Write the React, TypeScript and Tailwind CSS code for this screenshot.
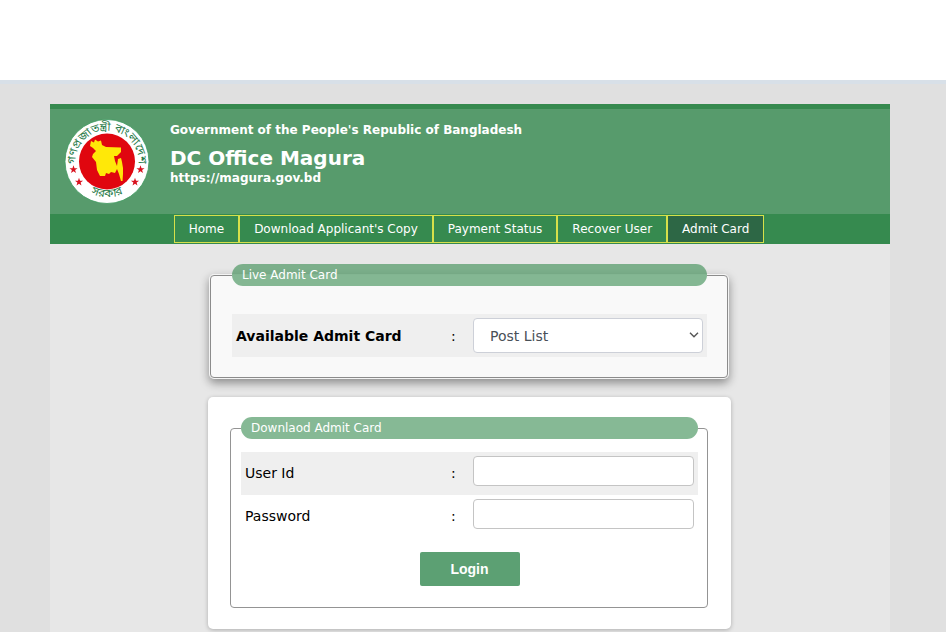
import type { ReactNode } from 'react';

const navItems = [
  { label: 'Home', href: '#home' },
  { label: "Download Applicant's Copy", href: '#copy' },
  { label: 'Payment Status', href: '#payment' },
  { label: 'Recover User', href: '#recover' },
  { label: 'Admit Card', href: '#admit', active: true },
];

const STAR = 'M0 -5 L1.2 -1.6 L4.8 -1.5 L1.9 0.6 L2.9 4 L0 2 L-2.9 4 L-1.9 0.6 L-4.8 -1.5 L-1.2 -1.6 Z';

function Emblem() {
  return (
    <svg viewBox="0 0 86 86" className="size-[86px] shrink-0" role="img" aria-label="Government seal">
      <defs>
        <path id="arcTop" d="M13.6 54.5 A31.5 31.5 0 1 1 72.4 54.5" />
        <path id="arcBottom" d="M15 64.5 A35.5 35.5 0 0 0 71 64.5" />
      </defs>
      <circle cx="43" cy="42.5" r="42" fill="#fff" stroke="#3f9a60" strokeWidth="0.8" />
      <circle cx="43" cy="42.5" r="28" fill="#e0060f" />
      <path
        fill="#ffe808"
        d="M27 22 L30 23.5 L31 20.5 L34 22.5 L37 21.5 L38 26 L42 28 L57 28.5 L57 33 L53 37 L50 37 L51 42 L53 47 L54 40 L57 39 L58 43 L59 49 L59 55 L58.5 62 L57 62 L55 55 L53 50 L51 54 L47 53 L45 55 L42 54 L41 57 L36 57 L33 51 L32 43 L28 38 L29 35 L32 32 L29 29 L26 27 Z"
      />
      <g fill="#2b7c4b" fontFamily='"Noto Sans Bengali", "Noto Sans", sans-serif' fontSize="11.5" fontWeight="400">
        <text textAnchor="middle">
          <textPath href="#arcTop" startOffset="50%">গণপ্রজাতন্ত্রী বাংলাদেশ</textPath>
        </text>
        <text textAnchor="middle">
          <textPath href="#arcBottom" startOffset="50%">সরকার</textPath>
        </text>
      </g>
      <g fill="#d9121f">
        <path d={STAR} transform="translate(9.5 50.5) scale(0.85)" />
        <path d={STAR} transform="translate(15 63) scale(0.85)" />
        <path d={STAR} transform="translate(76.5 50.5) scale(0.85)" />
        <path d={STAR} transform="translate(71 63) scale(0.85)" />
      </g>
    </svg>
  );
}

function Header() {
  return (
    <header className="border-t-[5px] border-[#368a4f] bg-[#579b6c]">
      <div className="flex h-[105px] gap-5 pl-[14px] pt-[10px] text-white">
        <Emblem />
        <div className="font-bold">
          <p className="mt-[3px] text-xs leading-4">Government of the People's Republic of Bangladesh</p>
          <h1 className="mt-2 text-xl leading-6">DC Office Magura</h1>
          <p className="text-xs leading-4">https://magura.gov.bd</p>
        </div>
      </div>
      <nav className="flex h-[30px] items-center justify-center bg-[#368a4f] pr-0.5">
        {navItems.map((item) => (
          <a
            key={item.label}
            href={item.href}
            className={
              item.active
                ? 'border border-[#d6e04a] bg-[#2d6745] px-[14px] text-xs leading-[26px] text-white'
                : 'border border-[#d6e04a] px-[14px] text-xs leading-[26px] text-white'
            }
          >
            {item.label}
          </a>
        ))}
      </nav>
    </header>
  );
}

function Legend({ children }: { children: ReactNode }) {
  return (
    <legend className="w-full rounded-full bg-[#368a4f]/60 px-[10px] py-px text-xs leading-5 text-white">
      {children}
    </legend>
  );
}

function LoginRow({ id, label, type, shaded }: { id: string; label: string; type: string; shaded?: boolean }) {
  return (
    <div className={shaded ? 'flex h-[43px] bg-[#efefef] p-1' : 'flex h-[43px] p-1'}>
      <label htmlFor={id} className="flex-1 text-sm leading-[34px]">
        {label}
      </label>
      <span className="w-[22px] text-sm leading-[34px]">:</span>
      <input id={id} type={type} className="h-[30px] w-[221px] rounded border border-[#c4c4c4] bg-white px-2 text-sm" />
    </div>
  );
}

function App() {
  return (
    <div className="flex min-h-screen flex-col bg-[#e0e0e0] font-['DejaVu_Sans',Verdana,sans-serif] text-black">
      <div className="h-[84px] border-b-4 border-[#d8e0e8] bg-white" />

      <div className="flex flex-1 flex-col pr-1.5 pt-5">
        <div className="mx-auto w-full max-w-[840px] flex-1 bg-[#e7e7e7]">
          <Header />

          <main className="mx-auto flex max-w-[524px] flex-col pr-px pt-5">
            <fieldset className="ml-0.5 mr-[3px] rounded border border-[#8c8c8c] bg-[#f9f9f9] pb-5 pl-[21px] pr-5 shadow-[0_0_0_1px_#f4f4f4,0_4px_10px_1px_rgba(0,0,0,0.4)]">
              <Legend>Live Admit Card</Legend>
              <div className="mt-7 flex h-[43px] bg-[#efefef] p-1">
                <label htmlFor="post" className="flex-1 text-sm font-bold leading-9">
                  Available Admit Card
                </label>
                <span className="w-[22px] text-sm leading-9">:</span>
                <div className="relative">
                  <select
                    id="post"
                    className="h-[35px] w-[230px] appearance-none rounded border border-[#cdd0d8] bg-white px-4 text-sm text-[#495057]"
                  >
                    <option>Post List</option>
                  </select>
                  <svg viewBox="0 0 10 6" className="pointer-events-none absolute right-1 top-[14px] h-1.5 w-2.5" aria-hidden="true">
                    <path d="M1 0.8 L5 4.8 L9 0.8" fill="none" stroke="#555" strokeWidth="1.4" />
                  </svg>
                </div>
              </div>
            </fieldset>

            <form
              className="mt-[19px] rounded-[5px] bg-white pb-[21px] pl-[22px] pr-[23px] pt-5 shadow-[0_1px_4px_rgba(0,0,0,0.25)]"
              onSubmit={(e) => e.preventDefault()}
            >
              <fieldset className="rounded border border-[#949494] pb-[21px] pl-[10px] pr-[9px]">
                <Legend>Downlaod Admit Card</Legend>
                <div className="pt-[13px]">
                  <LoginRow id="user" label="User Id" type="text" shaded />
                  <LoginRow id="password" label="Password" type="password" />
                </div>
                <div className="flex justify-center pt-[14px]">
                  <button
                    type="submit"
                    className="h-[34px] w-[100px] rounded-xs bg-[#5ca073] font-['Liberation_Sans',Arial,sans-serif] text-sm font-bold text-white"
                  >
                    Login
                  </button>
                </div>
              </fieldset>
            </form>
          </main>
        </div>
      </div>
    </div>
  );
}

export default App;
